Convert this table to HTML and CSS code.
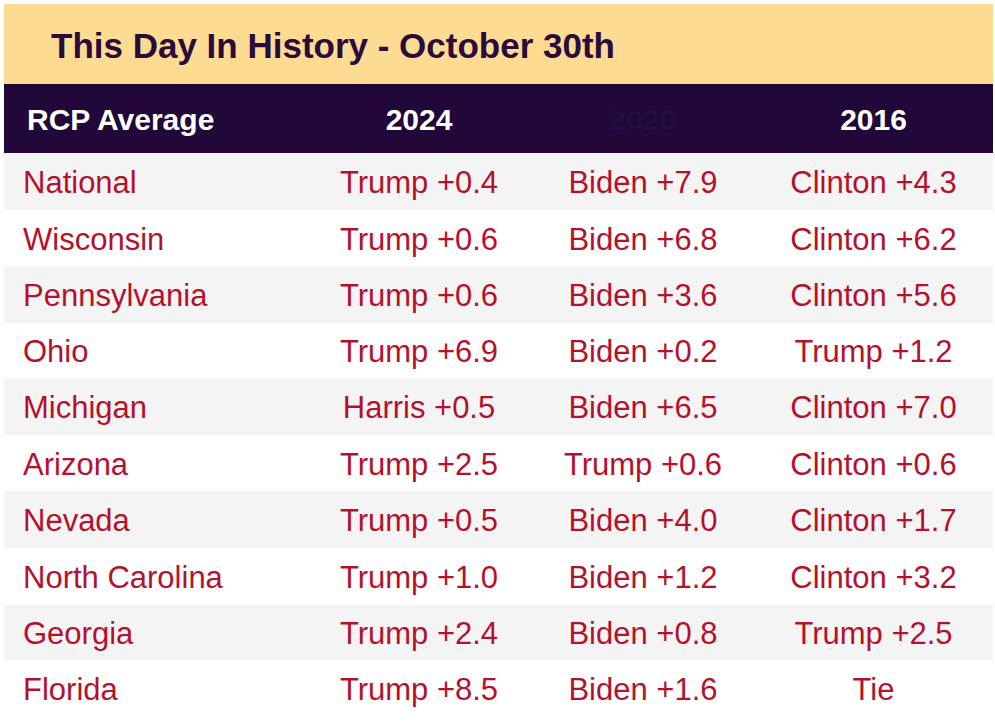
FILE: index.html
```html
<!DOCTYPE html>
<html lang="en">
<head>
<meta charset="utf-8">
<title>This Day In History - October 30th</title>
<link rel="stylesheet" href="styles.css">
</head>
<body>
<div class="card">
  <div class="title-band"><h1 class="title">This Day In History - October 30th</h1></div>
  <div class="row head">
    <div class="cell first">RCP Average</div>
    <div class="cell">2024</div>
    <div class="cell faint">2020</div>
    <div class="cell">2016</div>
  </div>
  <div class="row odd"><div class="cell first">National</div><div class="cell">Trump +0.4</div><div class="cell">Biden +7.9</div><div class="cell">Clinton +4.3</div></div>
  <div class="row"><div class="cell first">Wisconsin</div><div class="cell">Trump +0.6</div><div class="cell">Biden +6.8</div><div class="cell">Clinton +6.2</div></div>
  <div class="row odd"><div class="cell first">Pennsylvania</div><div class="cell">Trump +0.6</div><div class="cell">Biden +3.6</div><div class="cell">Clinton +5.6</div></div>
  <div class="row short"><div class="cell first">Ohio</div><div class="cell">Trump +6.9</div><div class="cell">Biden +0.2</div><div class="cell">Trump +1.2</div></div>
  <div class="row odd"><div class="cell first">Michigan</div><div class="cell">Harris +0.5</div><div class="cell">Biden +6.5</div><div class="cell">Clinton +7.0</div></div>
  <div class="row"><div class="cell first">Arizona</div><div class="cell">Trump +2.5</div><div class="cell">Trump +0.6</div><div class="cell">Clinton +0.6</div></div>
  <div class="row odd"><div class="cell first">Nevada</div><div class="cell">Trump +0.5</div><div class="cell">Biden +4.0</div><div class="cell">Clinton +1.7</div></div>
  <div class="row"><div class="cell first">North Carolina</div><div class="cell">Trump +1.0</div><div class="cell">Biden +1.2</div><div class="cell">Clinton +3.2</div></div>
  <div class="row odd short"><div class="cell first">Georgia</div><div class="cell">Trump +2.4</div><div class="cell">Biden +0.8</div><div class="cell">Trump +2.5</div></div>
  <div class="row"><div class="cell first">Florida</div><div class="cell">Trump +8.5</div><div class="cell">Biden +1.6</div><div class="cell">Tie</div></div>
</div>
</body>
</html>
```
FILE: styles.css
```css
html, body {
  margin: 0;
  padding: 0;
  background: #ffffff;
}
body {
  padding: 4px 2px 0 4px;
  font-family: "Liberation Sans", Arial, sans-serif;
}
.card {
  width: 989px;
}
.title-band {
  background: #fddb92;
  height: 80px;
  display: flex;
  align-items: center;
  padding-left: 47px;
}
.title {
  margin: 0;
  font-size: 35px;
  font-weight: bold;
  color: #2a0b3c;
  position: relative;
  top: 2px;
}
.row {
  display: grid;
  grid-template-columns: 302px 226px 222px 1fr;
  height: 56.7px;
  align-items: center;
  color: #b5112b;
  font-size: 31px;
}
.row.short {
  height: 55px;
}
.row.odd {
  background: #f4f4f4;
}
.row.head {
  background: #210839;
  height: 69px;
  color: #ffffff;
  font-weight: bold;
  font-size: 30px;
}
.cell {
  text-align: center;
  white-space: nowrap;
  padding-top: 3px;
}
.cell.first {
  text-align: left;
  padding-left: 19px;
}
.head .cell.first {
  padding-left: 23px;
}
.cell.faint {
  color: #260b47;
}
```
